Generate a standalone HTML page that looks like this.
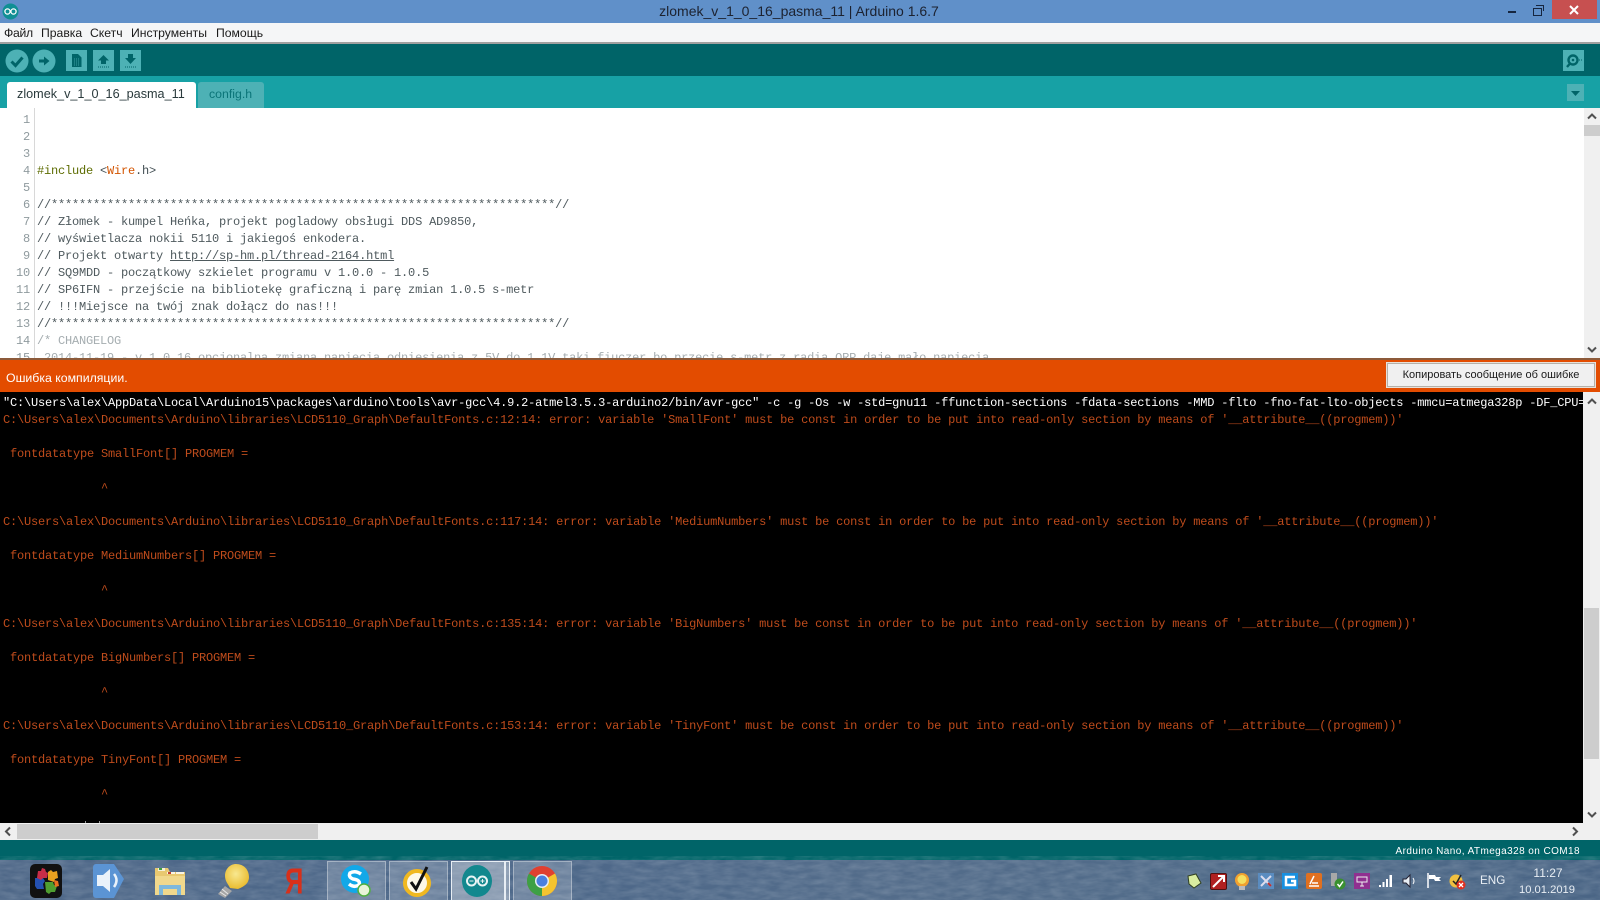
<!DOCTYPE html>
<html><head><meta charset="utf-8"><title>zlomek_v_1_0_16_pasma_11 | Arduino 1.6.7</title>
<style>
html,body{margin:0;padding:0;width:1600px;height:900px;overflow:hidden;background:#000;font-family:"Liberation Sans","Noto Sans CJK SC",sans-serif}
.a{position:absolute}
.m{position:absolute;white-space:pre;font-family:"Liberation Mono",monospace;font-size:12px;letter-spacing:-.2px;line-height:17px;height:17px;margin-top:1px}
.c .m{margin-top:2px}
.n{position:absolute;left:0;width:30px;text-align:right;font-family:"Liberation Mono",monospace;font-size:12px;line-height:17px;letter-spacing:-.2px;color:#8f9a9e;margin-top:1px}
.d{color:#4f5a5e}
.e{color:#bf4c1c}
.menu{position:absolute;top:25px;font-size:12.2px;line-height:16px;color:#1a1a1a;white-space:pre}
svg{position:absolute;overflow:visible}
</style></head><body>
<div class="a" style="left:0;top:0;width:1600px;height:900px;overflow:hidden">

<!-- title bar -->
<div class="a" style="left:0;top:0;width:1600px;height:23px;background:#6090c9"></div>
<svg style="left:2px;top:3px" width="17" height="17" viewBox="0 0 17 17"><circle cx="8.5" cy="8.5" r="8" fill="#0f8f94"/><circle cx="5.5" cy="8.5" r="2.6" fill="none" stroke="#fff" stroke-width="1.3"/><circle cx="11.5" cy="8.5" r="2.6" fill="none" stroke="#fff" stroke-width="1.3"/></svg>
<div class="a" style="left:0;top:2px;width:1598px;text-align:center;font-size:14px;line-height:18px;color:#1c2230">zlomek_v_1_0_16_pasma_11 | Arduino 1.6.7</div>
<div class="a" style="left:1508px;top:11px;width:8px;height:2px;background:#16263f"></div>
<div class="a" style="left:1533px;top:8px;width:7px;height:6px;border:1.5px solid #16263f"></div>
<div class="a" style="left:1536px;top:5px;width:7px;height:5px;border:1px solid #16263f;border-bottom:0;border-left:0"></div>
<div class="a" style="left:1552px;top:0;width:45px;height:19px;background:#c75050"></div>
<svg style="left:1568px;top:5px" width="12" height="10" viewBox="0 0 12 10"><path d="M2 1L10 9M10 1L2 9" stroke="#fff" stroke-width="2"/></svg>

<!-- menu -->
<div class="a" style="left:0;top:23px;width:1600px;height:19px;background:#f5f6f7"></div>
<div class="a" style="left:0;top:42px;width:1600px;height:2px;background:#a0a0a0"></div>
<div class="menu" style="left:4px;letter-spacing:-.3px">Файл</div>
<div class="menu" style="left:41px">Правка</div>
<div class="menu" style="left:90px">Скетч</div>
<div class="menu" style="left:131px">Инструменты</div>
<div class="menu" style="left:216px">Помощь</div>

<!-- toolbar -->
<div class="a" style="left:0;top:44px;width:1600px;height:32px;background:#006468"></div>
<svg style="left:5px;top:49px" width="24" height="24" viewBox="0 0 24 24"><circle cx="12" cy="12" r="11.5" fill="#4db1b5"/><path d="M6.5 12.5L10.5 16.5L17.5 8.5" fill="none" stroke="#006468" stroke-width="3"/></svg>
<svg style="left:32px;top:49px" width="24" height="24" viewBox="0 0 24 24"><circle cx="12" cy="12" r="11.5" fill="#4db1b5"/><path d="M7 10.500H12V7.500L17.500 12L12 16.500V13.500H7Z" fill="#006468"/></svg>
<div class="a" style="left:66px;top:50px;width:21px;height:21px;background:#4db1b5"></div>
<svg style="left:66px;top:50px" width="21" height="21" viewBox="0 0 21 21"><path d="M6 4H12L15.5 7.5V17H6Z" fill="#006468"/><path d="M8 9H14M8 11H14M8 13H14M8 15H14" stroke="#4db1b5" stroke-width=".7" stroke-dasharray="1 1"/></svg>
<div class="a" style="left:93px;top:50px;width:21px;height:21px;background:#4db1b5"></div>
<svg style="left:93px;top:50px" width="21" height="21" viewBox="0 0 21 21"><path d="M10.5 5L16 10.5H13V14H8V10.500H5Z" fill="#006468"/><path d="M5 17H16" stroke="#006468" stroke-width="1" stroke-dasharray="1 1"/></svg>
<div class="a" style="left:120px;top:50px;width:21px;height:21px;background:#4db1b5"></div>
<svg style="left:120px;top:50px" width="21" height="21" viewBox="0 0 21 21"><path d="M8 4H13V8H16L10.500 14L5 8H8Z" fill="#006468"/><path d="M5 17H16" stroke="#006468" stroke-width="1" stroke-dasharray="1 1"/></svg>
<div class="a" style="left:1563px;top:50px;width:21px;height:21px;background:#4db1b5"></div>
<svg style="left:1563px;top:50px" width="21" height="21" viewBox="0 0 21 21"><circle cx="10" cy="10" r="4.500" fill="none" stroke="#006468" stroke-width="2.400"/><circle cx="10" cy="10" r="1.300" fill="#006468"/><path d="M7 13.500L4 17" stroke="#006468" stroke-width="2.400"/><path d="M16 10H20" stroke="#006468" stroke-dasharray="1 1"/></svg>

<!-- tabs -->
<div class="a" style="left:0;top:76px;width:1600px;height:32px;background:#17a1a5"></div>
<div class="a" style="left:7px;top:82px;width:189px;height:26px;background:#fff;border-radius:3px 3px 0 0"></div>
<div class="a" style="left:17px;top:85px;font-size:12.65px;line-height:18px;color:#2a3a3c;white-space:pre">zlomek_v_1_0_16_pasma_11</div>
<div class="a" style="left:198px;top:82px;width:66px;height:26px;background:#4db1b5;border-radius:3px 3px 0 0"></div>
<div class="a" style="left:209px;top:85px;font-size:12.3px;line-height:18px;color:#0a7478;white-space:pre">config.h</div>
<div class="a" style="left:1567px;top:84px;width:17px;height:17px;background:#4db1b5"></div>
<svg style="left:1567px;top:84px" width="17" height="17" viewBox="0 0 17 17"><path d="M4 7H13L8.500 12Z" fill="#006468"/></svg>

<!-- editor -->
<div class="a" style="left:0;top:108px;width:1600px;height:250px;background:#fff;overflow:hidden">
<div class="a" style="left:34px;top:0;width:1px;height:250px;background:#d8d8d8"></div>
<div class="n" style="top:3px">1</div>
<div class="n" style="top:20px">2</div>
<div class="n" style="top:37px">3</div>
<div class="n" style="top:54px">4</div>
<div class="n" style="top:71px">5</div>
<div class="n" style="top:88px">6</div>
<div class="n" style="top:105px">7</div>
<div class="n" style="top:122px">8</div>
<div class="n" style="top:139px">9</div>
<div class="n" style="top:156px">10</div>
<div class="n" style="top:173px">11</div>
<div class="n" style="top:190px">12</div>
<div class="n" style="top:207px">13</div>
<div class="n" style="top:224px">14</div>
<div class="n" style="top:241px">15</div>
<div class="m" style="left:37px;top:54px;color:#434f54"><span style="color:#5e6d03">#include</span> &lt;<span style="color:#d35400">Wire</span>.h&gt;</div>
<div class="m d" style="left:37px;top:88px">//************************************************************************//</div>
<div class="m d" style="left:37px;top:105px">// Złomek - kumpel Heńka, projekt pogladowy obsługi DDS AD9850,</div>
<div class="m d" style="left:37px;top:122px">// wyświetlacza nokii 5110 i jakiegoś enkodera.</div>
<div class="m d" style="left:37px;top:139px">// Projekt otwarty <u>http://sp-hm.pl/thread-2164.html</u></div>
<div class="m d" style="left:37px;top:156px">// SQ9MDD - początkowy szkielet programu v 1.0.0 - 1.0.5</div>
<div class="m d" style="left:37px;top:173px">// SP6IFN - przejście na bibliotekę graficzną i parę zmian 1.0.5 s-metr</div>
<div class="m d" style="left:37px;top:190px">// !!!Miejsce na twój znak dołącz do nas!!!</div>
<div class="m d" style="left:37px;top:207px">//************************************************************************//</div>
<div class="m" style="left:37px;top:224px;color:#a5adb0">/* CHANGELOG</div>
<div class="m" style="left:37px;top:241px;color:#a5adb0"> 2014-11-19 - v 1.0.16 opcjonalna zmiana napiecia odniesienia z 5V do 1.1V taki fiuczer bo przecie s-metr z radia QRP daje mało napiecia</div>
<div class="a" style="left:1584px;top:0;width:16px;height:250px;background:#f0f0f0"></div>
<div class="a" style="left:1584px;top:17px;width:16px;height:11px;background:#cdcdcd"></div>
<svg style="left:1584px;top:0" width="16" height="17" viewBox="0 0 16 17"><path d="M4 10.500L8 6.500L12 10.500" fill="none" stroke="#505050" stroke-width="2"/></svg>
<svg style="left:1584px;top:233px" width="16" height="17" viewBox="0 0 16 17"><path d="M4 6.500L8 10.500L12 6.500" fill="none" stroke="#505050" stroke-width="2"/></svg>
</div>

<!-- status -->
<div class="a" style="left:0;top:358px;width:1600px;height:34px;background:#e34c00"></div>
<div class="a" style="left:0;top:358px;width:1600px;height:2px;background:#8c5a3a"></div>
<div class="a" style="left:6px;top:370px;font-size:12.3px;line-height:16px;color:#fff;white-space:pre">Ошибка компиляции.</div>
<div class="a" style="left:1387px;top:363px;width:206px;height:22px;background:#f0f0f0;border:1px solid #b5b0a8;outline:1px solid #e8e0d8;font-size:11px;line-height:22px;text-align:center;color:#1a1a1a;white-space:pre">Копировать сообщение об ошибке</div>

<!-- console -->
<div class="a c" style="left:0;top:392px;width:1583px;height:431px;background:#000;overflow:hidden">
<div class="m" style="left:3px;top:1px;color:#fff">"C:\Users\alex\AppData\Local\Arduino15\packages\arduino\tools\avr-gcc\4.9.2-atmel3.5.3-arduino2/bin/avr-gcc" -c -g -Os -w -std=gnu11 -ffunction-sections -fdata-sections -MMD -flto -fno-fat-lto-objects -mmcu=atmega328p -DF_CPU=16000000L</div>
<div class="m e" style="left:3px;top:18px">C:\Users\alex\Documents\Arduino\libraries\LCD5110_Graph\DefaultFonts.c:12:14: error: variable 'SmallFont' must be const in order to be put into read-only section by means of '__attribute__((progmem))'</div>
<div class="m e" style="left:3px;top:52px"> fontdatatype SmallFont[] PROGMEM =</div>
<div class="m e" style="left:3px;top:86px">              ^</div>
<div class="m e" style="left:3px;top:120px">C:\Users\alex\Documents\Arduino\libraries\LCD5110_Graph\DefaultFonts.c:117:14: error: variable 'MediumNumbers' must be const in order to be put into read-only section by means of '__attribute__((progmem))'</div>
<div class="m e" style="left:3px;top:154px"> fontdatatype MediumNumbers[] PROGMEM =</div>
<div class="m e" style="left:3px;top:188px">              ^</div>
<div class="m e" style="left:3px;top:222px">C:\Users\alex\Documents\Arduino\libraries\LCD5110_Graph\DefaultFonts.c:135:14: error: variable 'BigNumbers' must be const in order to be put into read-only section by means of '__attribute__((progmem))'</div>
<div class="m e" style="left:3px;top:256px"> fontdatatype BigNumbers[] PROGMEM =</div>
<div class="m e" style="left:3px;top:290px">              ^</div>
<div class="m e" style="left:3px;top:324px">C:\Users\alex\Documents\Arduino\libraries\LCD5110_Graph\DefaultFonts.c:153:14: error: variable 'TinyFont' must be const in order to be put into read-only section by means of '__attribute__((progmem))'</div>
<div class="m e" style="left:3px;top:358px"> fontdatatype TinyFont[] PROGMEM =</div>
<div class="m e" style="left:3px;top:392px">              ^</div>
<div class="a" style="left:85px;top:429px;width:1px;height:2px;background:#999"></div>
<div class="a" style="left:99px;top:429px;width:1px;height:2px;background:#999"></div>
</div>
<!-- console vscroll -->
<div class="a" style="left:1583px;top:392px;width:17px;height:431px;background:#f0f0f0"></div>
<div class="a" style="left:1584px;top:608px;width:15px;height:151px;background:#cdcdcd"></div>
<svg style="left:1584px;top:393px" width="16" height="17" viewBox="0 0 16 17"><path d="M4 10.500L8 6.500L12 10.500" fill="none" stroke="#505050" stroke-width="2"/></svg>
<svg style="left:1584px;top:806px" width="16" height="17" viewBox="0 0 16 17"><path d="M4 6.500L8 10.500L12 6.500" fill="none" stroke="#505050" stroke-width="2"/></svg>

<!-- hscroll -->
<div class="a" style="left:0;top:823px;width:1600px;height:17px;background:#f0f0f0"></div>
<div class="a" style="left:17px;top:824px;width:301px;height:15px;background:#cdcdcd"></div>
<svg style="left:0;top:823px" width="16" height="17" viewBox="0 0 16 17"><path d="M10 4.500L6 8.500L10 12.500" fill="none" stroke="#505050" stroke-width="2"/></svg>
<svg style="left:1567px;top:823px" width="16" height="17" viewBox="0 0 16 17"><path d="M6 4.500L10 8.500L6 12.500" fill="none" stroke="#505050" stroke-width="2"/></svg>

<!-- footer -->
<div class="a" style="left:0;top:840px;width:1600px;height:20px;background:#006468"></div>
<div class="a" style="right:20px;top:844px;font-size:10px;line-height:16px;letter-spacing:.42px;color:#fff;white-space:pre">Arduino Nano, ATmega328 on COM18</div>

<!-- taskbar -->
<div class="a" style="left:0;top:860px;width:1600px;height:40px;background:linear-gradient(90deg,#4f6888 0%,#4b6688 30%,#536c8a 55%,#4f6a88 80%,#4a6585 100%)"></div>
<svg style="left:0;top:860px" width="1600" height="40"><filter id="nz"><feTurbulence type="fractalNoise" baseFrequency=".06 .2" numOctaves="3" seed="4"/><feColorMatrix values="0 0 0 0 .75  0 0 0 0 .8  0 0 0 0 .85  .28 0 0 0 -.07"/></filter><rect width="1600" height="40" filter="url(#nz)"/></svg>

<!-- pinned boxes -->
<div class="a" style="left:327px;top:861px;width:57px;height:38px;background:rgba(255,255,255,.18);border:1px solid rgba(255,255,255,.35)"></div>
<div class="a" style="left:389px;top:861px;width:57px;height:38px;background:rgba(255,255,255,.18);border:1px solid rgba(255,255,255,.35)"></div>
<div class="a" style="left:451px;top:861px;width:52px;height:38px;background:rgba(255,255,255,.35);border:1px solid #e8eef4"></div>
<div class="a" style="left:505px;top:861px;width:3px;height:38px;background:rgba(255,255,255,.35);border:1px solid #e8eef4"></div>
<div class="a" style="left:513px;top:861px;width:57px;height:38px;background:rgba(255,255,255,.18);border:1px solid rgba(255,255,255,.35)"></div>

<!-- puzzle -->
<svg style="left:30px;top:864px" width="32" height="34" viewBox="0 0 32 34"><rect width="32" height="34" rx="5" fill="#111"/><path d="M5 14h8l2 3-2 3 1 5H7l-2-3z" fill="#2450b0"/><path d="M8 7h3l1-3 3 1 1 3 2 1-1 5h-4l-2 2-4-2z" fill="#c82c48"/><path d="M18 8l3-2 2 2 4-1 1 7-3 1-1 3-6-2z" fill="#e8a020"/><path d="M15 18h8l1 3 3 1-2 6h-4l-2 2-3-2z" fill="#4f9e30"/><path d="M24 16l4 1 1 5-4 1z" fill="#e87020"/></svg>
<!-- speaker badge -->
<svg style="left:92px;top:864px" width="32" height="34" viewBox="0 0 32 34"><path d="M4 0H22L32 15L22 34H4Q1 34 1 30V4Q1 0 4 0Z" fill="#5b94d4"/><path d="M5 11H11L18 5V28L11 22H5Z" fill="#eaf2fa"/><path d="M22 10Q27 16 22 23" fill="none" stroke="#eaf2fa" stroke-width="2.500"/></svg>
<!-- folder -->
<svg style="left:154px;top:865px" width="32" height="32" viewBox="0 0 32 32"><path d="M1 3H14L16 7H31V30H1Z" fill="#e8c870"/><path d="M4 3h7v3H4z" fill="#f4f0d8"/><path d="M13 7h8v2h-8zM22 7h8v2h-8z" fill="#f8f4e4"/><path d="M5 3h3v2H5z" fill="#40a040"/><path d="M14 7h3v2h-3z" fill="#c04030"/><path d="M1 11H31V30H1Z" fill="#f0d88c"/><path d="M5 30V20H27V30H23V24H9V30Z" fill="#7db8dc"/></svg>
<!-- bulb -->
<svg style="left:216px;top:864px" width="34" height="34" viewBox="0 0 34 34"><defs><radialGradient id="bb" cx=".45" cy=".4" r=".65"><stop offset="0" stop-color="#f8e890"/><stop offset="1" stop-color="#e8b828"/></radialGradient></defs><path d="M20 0C28 0 33 6 33 13C33 20 27 23 22 25L14 24C12 20 9 17 9 12C9 5 14 0 20 0Z" fill="url(#bb)"/><path d="M9 22L16 27L9 34L2 30Z" fill="#a6a6a6"/><path d="M6 25L12 30M4 28L10 32" stroke="#e8e8e8"/></svg>
<!-- Ya -->
<div class="a" style="left:285px;top:862px;font-size:34px;line-height:38px;color:#d8301a;white-space:pre;transform:scale(.75,1.05);transform-origin:0 0;font-weight:bold">Я</div>
<!-- skype -->
<svg style="left:340px;top:864px" width="32" height="34" viewBox="0 0 32 34"><circle cx="15" cy="15" r="14" fill="#12a8e8"/><path d="M21 10Q15 6 10 9Q8 13 13 15Q21 16 19 21Q14 24 9 20" fill="none" stroke="#fff" stroke-width="3.500"/><circle cx="24" cy="26" r="6" fill="#e8f4d8" stroke="#50b040" stroke-width="1.500"/></svg>
<!-- norton -->
<svg style="left:402px;top:864px" width="32" height="34" viewBox="0 0 32 34"><circle cx="15" cy="19" r="12" fill="#fdf8e8" stroke="#f0b820" stroke-width="4"/><path d="M9 18L14 25L25 3" fill="none" stroke="#111" stroke-width="3"/></svg>
<!-- arduino -->
<svg style="left:461px;top:864px" width="32" height="34" viewBox="0 0 32 34"><ellipse cx="16" cy="17" rx="15" ry="16" fill="#12888e"/><circle cx="10.500" cy="17" r="4.500" fill="none" stroke="#e8f4f4" stroke-width="2"/><circle cx="21.500" cy="17" r="4.500" fill="none" stroke="#e8f4f4" stroke-width="2"/><path d="M8.500 17h4M19.500 17h4M21.500 15v4" stroke="#e8f4f4"/></svg>
<!-- chrome -->
<svg style="left:526px;top:865px" width="32" height="32" viewBox="0 0 32 32"><circle cx="16" cy="16" r="15" fill="#e04030"/><path d="M16 16L3 8.500A15 15 0 0 0 16 31L24 18Z" fill="#3da045"/><path d="M16 16L29 8.500A15 15 0 0 1 16 31Z" fill="#f4c430"/><circle cx="16" cy="16" r="7" fill="#e8eef4"/><circle cx="16" cy="16" r="5.500" fill="#4a80e0"/></svg>

<!-- tray -->
<svg style="left:1186px;top:873px" width="16" height="16" viewBox="0 0 16 16"><path d="M2 3L10 1L15 10L8 15L3 11Z" fill="#d8eca0" stroke="#304020"/></svg>
<div class="a" style="left:1210px;top:873px;width:15px;height:15px;background:#b02020;border:1px solid #501010;border-radius:2px"></div>
<svg style="left:1210px;top:873px" width="17" height="17" viewBox="0 0 17 17"><path d="M3 14L13 4M8 3H14V9" fill="none" stroke="#fff" stroke-width="2"/></svg>
<svg style="left:1234px;top:873px" width="16" height="17" viewBox="0 0 16 17"><circle cx="8" cy="7" r="7" fill="#f0a030"/><circle cx="8" cy="6.500" r="4.500" fill="#f4e060"/><rect x="5" y="13" width="6" height="4" fill="#bbb"/></svg>
<svg style="left:1258px;top:873px" width="16" height="16" viewBox="0 0 16 16"><rect width="16" height="16" fill="#5a8cc0"/><path d="M3 13L13 3M3 3L13 13" stroke="#dde" stroke-width="2"/><path d="M10 10l3 3" stroke="#c03030" stroke-width="2"/></svg>
<svg style="left:1282px;top:873px" width="16" height="16" viewBox="0 0 16 16"><rect width="16" height="16" fill="#1890e0"/><path d="M13 4H4V12H13V8H9" fill="none" stroke="#fff" stroke-width="2.500"/></svg>
<svg style="left:1306px;top:873px" width="16" height="16" viewBox="0 0 16 16"><rect width="16" height="16" rx="2" fill="#e07020"/><path d="M4 11L8 3M3 13H13M6 10H12" stroke="#fff" stroke-width="1.500"/></svg>
<svg style="left:1330px;top:873px" width="16" height="17" viewBox="0 0 16 17"><rect x="1" y="0" width="6" height="13" fill="#a8a8a8"/><circle cx="10" cy="11" r="5.500" fill="#3a9030"/><path d="M7.500 11L9.500 13.500L13 8.500" fill="none" stroke="#fff" stroke-width="1.500"/></svg>
<svg style="left:1354px;top:873px" width="16" height="16" viewBox="0 0 16 16"><rect width="16" height="16" fill="#903090"/><path d="M3 4H13V9H3ZM8 9V13M6 13H10" fill="none" stroke="#eee"/></svg>
<svg style="left:1378px;top:874px" width="16" height="14" viewBox="0 0 16 14"><path d="M1 11h2v2H1zM4.500 8h2v5h-2zM8 5h2v8H8zM11.500 1h2.500v12h-2.500z" fill="#fff"/></svg>
<svg style="left:1402px;top:873px" width="16" height="16" viewBox="0 0 16 16"><path d="M1 6H4L8 2V14L4 10H1Z" fill="#e8eef4" stroke="#223"/><path d="M11 5Q13 8 11 11" fill="none" stroke="#fff"/></svg>
<svg style="left:1426px;top:873px" width="16" height="16" viewBox="0 0 16 16"><path d="M2 0V15" stroke="#fff" stroke-width="1.500"/><path d="M3 2H9L10 4H15L13 6L15 8H9L8 6H3Z" fill="#fff"/></svg>
<svg style="left:1449px;top:873px" width="17" height="17" viewBox="0 0 17 17"><circle cx="7" cy="8" r="6.500" fill="#f0c040"/><path d="M4 8L7 11L12 2" fill="none" stroke="#222" stroke-width="1.500"/><circle cx="12" cy="12" r="4.500" fill="#e03020"/><path d="M10 10L14 14M14 10L10 14" stroke="#fff" stroke-width="1.300"/></svg>
<div class="a" style="left:1480px;top:873px;font-size:11.7px;line-height:16px;color:#e8eef4;white-space:pre">ENG</div>
<div class="a" style="left:1500px;width:96px;top:865px;font-size:12px;line-height:16px;color:#e8eef4;text-align:center;white-space:pre">11:27</div>
<div class="a" style="left:1500px;width:94px;top:882px;font-size:11.2px;line-height:16px;color:#e8eef4;text-align:center;white-space:pre">10.01.2019</div>
</div>
</body></html>
